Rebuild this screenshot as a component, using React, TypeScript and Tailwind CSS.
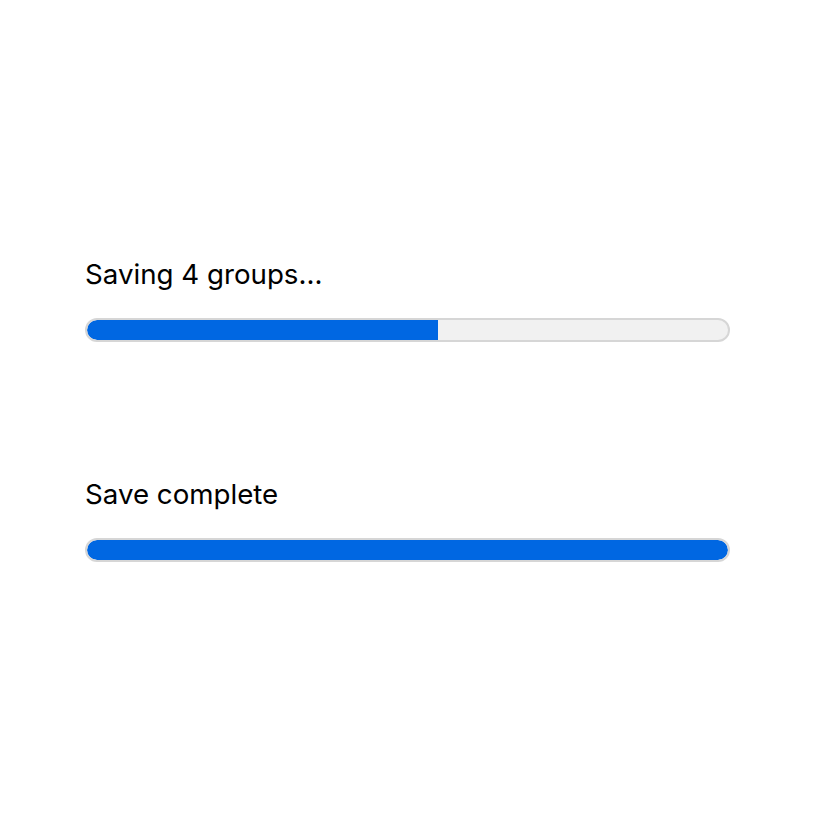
import React from "react";

function Bar({ pct }: { pct: number }) {
  return (
    <div className="h-[24px] w-full rounded-full border-2 border-[#d6d6d6] bg-[#f1f1f1] overflow-hidden">
      <div
        className={`h-full bg-[#0067e2] rounded-l-full ${pct >= 100 ? "rounded-r-full" : ""}`}
        style={{ width: `${pct}%` }}
      />
    </div>
  );
}

export default function App() {
  return (
    <div
      className="min-h-screen bg-white pt-[256px] pl-[85px] pr-[86px] text-black"
      style={{ fontFamily: "Inter, 'Noto Sans', sans-serif" }}
    >
      <div className="flex flex-col">
        <div className="text-[27.7px] leading-[36px]">Saving 4 groups...</div>
        <div className="mt-[26px]">
          <Bar pct={54.7} />
        </div>
      </div>
      <div className="mt-[134px] flex flex-col">
        <div className="text-[27.7px] leading-[36px]">Save complete</div>
        <div className="mt-[26px]">
          <Bar pct={100} />
        </div>
      </div>
    </div>
  );
}
